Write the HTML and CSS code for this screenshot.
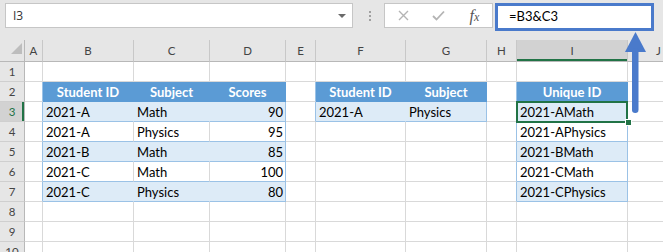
FILE: index.html
```html
<!DOCTYPE html>
<html>
<head>
  <title>Unique ID</title>
  <link rel="stylesheet" href="styles.css">
</head>
<body>

<div class="bar">
  <div class="namebox">I3<span class="drop"></span></div>
  <div class="grip"><i></i><i></i><i></i></div>
  <div class="fxbox">
    <span class="slot"><svg width="11" height="11" viewBox="0 0 11 11"><path d="M1 1L10 10M10 1L1 10" stroke="#b4b4b4" stroke-width="1.4" fill="none"/></svg></span>
    <span class="slot"><svg width="13" height="11" viewBox="0 0 13 11"><path d="M1 6L4.5 9.5L12 1.5" stroke="#b4b4b4" stroke-width="1.8" fill="none"/></svg></span>
    <span class="slot fx">f<small>x</small></span>
  </div>
  <div class="formula">=B3&amp;C3</div>
</div>

<table class="sheet">
<colgroup>
  <col width="25"><col width="18"><col width="91"><col width="76"><col width="76"><col width="30">
  <col width="90"><col width="81"><col width="30"><col width="111"><col width="62">
</colgroup>
<tr class="colhead">
  <th class="corner"><svg width="25" height="17" viewBox="0 0 25 17"><polygon points="22,3 22,14 11,14" fill="#bdbdbd"/></svg></th>
  <th>A</th><th>B</th><th>C</th><th>D</th><th>E</th><th>F</th><th>G</th><th>H</th><th class="cur">I</th><th>J</th>
</tr>
<tr>
  <th>1</th><td></td><td></td><td></td><td></td><td></td><td></td><td></td><td></td><td></td><td></td>
</tr>
<tr>
  <th>2</th><td class="lb"></td>
  <td class="hd">Student ID</td><td class="hd">Subject</td><td class="hd">Scores</td>
  <td class="lb"></td>
  <td class="hd">Student ID</td><td class="hd">Subject</td>
  <td class="lb"></td>
  <td class="hd">Unique ID</td><td></td>
</tr>
<tr>
  <th class="cur">3</th><td class="lb"></td>
  <td class="band">2021-A</td><td class="band">Math</td><td class="band num last">90</td>
  <td class="lb"></td>
  <td class="band">2021-A</td><td class="band last">Physics</td>
  <td class="lb"></td>
  <td class="band last sel">2021-AMath</td><td></td>
</tr>
<tr>
  <th>4</th><td class="lb"></td>
  <td class="row">2021-A</td><td class="row">Physics</td><td class="row num last">95</td>
  <td></td><td></td><td></td>
  <td class="lb"></td>
  <td class="row last">2021-APhysics</td><td></td>
</tr>
<tr>
  <th>5</th><td class="lb"></td>
  <td class="band">2021-B</td><td class="band">Math</td><td class="band num last">85</td>
  <td></td><td></td><td></td>
  <td class="lb"></td>
  <td class="band last">2021-BMath</td><td></td>
</tr>
<tr>
  <th>6</th><td class="lb"></td>
  <td class="row">2021-C</td><td class="row">Math</td><td class="row num last">100</td>
  <td></td><td></td><td></td>
  <td class="lb"></td>
  <td class="row last">2021-CMath</td><td></td>
</tr>
<tr>
  <th>7</th><td class="lb"></td>
  <td class="band">2021-C</td><td class="band">Physics</td><td class="band num last">80</td>
  <td></td><td></td><td></td>
  <td class="lb"></td>
  <td class="band last">2021-CPhysics</td><td></td>
</tr>
<tr>
  <th>8</th><td></td><td></td><td></td><td></td><td></td><td></td><td></td><td></td><td></td><td></td>
</tr>
<tr>
  <th>9</th><td></td><td></td><td></td><td></td><td></td><td></td><td></td><td></td><td></td><td></td>
</tr>
<tr>
  <th>10</th><td></td><td></td><td></td><td></td><td></td><td></td><td></td><td></td><td></td><td></td>
</tr>
</table>

<!-- callout arrow pointing at the formula -->
<svg class="arrow" width="32" height="86" viewBox="0 0 32 86">
  <polygon points="15.5,2 26,22 5,22" fill="#4a7acb"/>
  <rect x="12" y="18" width="6.5" height="65" rx="3.2" fill="#4a7acb"/>
</svg>

</body>
</html>
```

FILE: styles.css
```css
BODY { margin: 0; width: 663px; height: 252px; overflow: hidden; position: relative;
       font-family: Lato, "Liberation Sans", sans-serif; font-size: 13px; color: #000; background: #fff }

/* formula bar */
.bar { display: flex; align-items: flex-start; height: 40px; box-sizing: border-box;
       padding: 3px 0 0 5px; background: #e6e6e6 }
.namebox { position: relative; width: 348px; height: 25px; box-sizing: border-box; padding-left: 7px;
           border: 1px solid #c6c6c6; background: #fff; color: #333;
           font: 12px/23px "Open Sans", sans-serif }
.drop { position: absolute; right: 6px; top: 10px; width: 0; height: 0;
        border-left: 4px solid transparent; border-right: 4px solid transparent; border-top: 4px solid #6a6a6a }
.grip { display: flex; flex-direction: column; gap: 2px; margin: 8px 0 0 16px }
.grip i { display: block; width: 2px; height: 2px; background: #a0a0a0 }
.fxbox { display: flex; align-items: center; width: 109px; height: 25px; box-sizing: border-box;
         margin-left: 13px; padding-left: 1px; border: 1px solid #c6c6c6; background: #fff }
.slot { display: flex; justify-content: center; align-items: center; width: 36px; height: 23px }
.fx { font: italic 16px "Liberation Serif", serif; color: #555 }
.fx small { font-size: 12px; margin-top: 4px }
.formula { width: 159px; height: 28px; box-sizing: border-box; margin-left: 2px; padding-left: 11px;
           border: 3px solid #4a7acb; background: #fff; line-height: 21px }

/* grid */
.sheet { border-collapse: separate; border-spacing: 0; table-layout: fixed; width: 690px }
.sheet TR { height: 20px }
.sheet TR.colhead { height: 18px }
.sheet TD, .sheet TH { padding: 1px 0 0 3px; border-right: 1px solid #d9d9d9; border-bottom: 1px solid #d9d9d9;
                       line-height: 18px; white-space: nowrap; overflow: visible; text-align: left; font-weight: normal }
.sheet TH { padding: 1px 0 0 0; text-align: center; background: #e6e6e6; color: #444; font-size: 11.5px;
            border-right-color: #cfcfcf; border-bottom-color: #cfcfcf }
.sheet TR.colhead TH { padding-top: 0; line-height: 17px; border-bottom-color: #b8b8b8; border-right-color: #c8c8c8 }
.sheet TR TH:first-child { border-right-color: #b8b8b8 }
.sheet TH.corner { padding: 0; line-height: 0; vertical-align: top }
.sheet TH.cur { background: #d2d2d2; color: #217346 }
.sheet TR.colhead TH.cur { color: #444; box-shadow: inset 0 -2px 0 #217346 }
.sheet TR TH.cur:first-child { box-shadow: inset -2px 0 0 #217346 }

/* tables */
.sheet TD.lb { border-right-color: #9bc2e6 }
.sheet TD.hd { padding-left: 0; text-align: center; font-weight: bold; color: #fff; background: #5b9bd5;
               border-right-color: #5b9bd5; border-bottom-color: #5b9bd5 }
.sheet TD.band { background: #ddebf7; border-right-color: #ddebf7; border-bottom-color: #9bc2e6 }
.sheet TD.row { border-bottom-color: #9bc2e6 }
.sheet TD.last { border-right-color: #9bc2e6 }
.sheet TD.num { text-align: right; padding-right: 2px }

/* active cell */
.sheet TD.sel { position: relative }
.sheet TD.sel:after { content: ""; position: absolute; left: -1px; top: -1px; right: -1px; bottom: -2px;
                      border: 2px solid #217346 }
.sheet TD.sel:before { content: ""; position: absolute; right: -5px; bottom: -5px; width: 5px; height: 5px;
                       background: #217346; border: 1px solid #fff; z-index: 1 }

.arrow { position: absolute; left: 620px; top: 30px }
```
